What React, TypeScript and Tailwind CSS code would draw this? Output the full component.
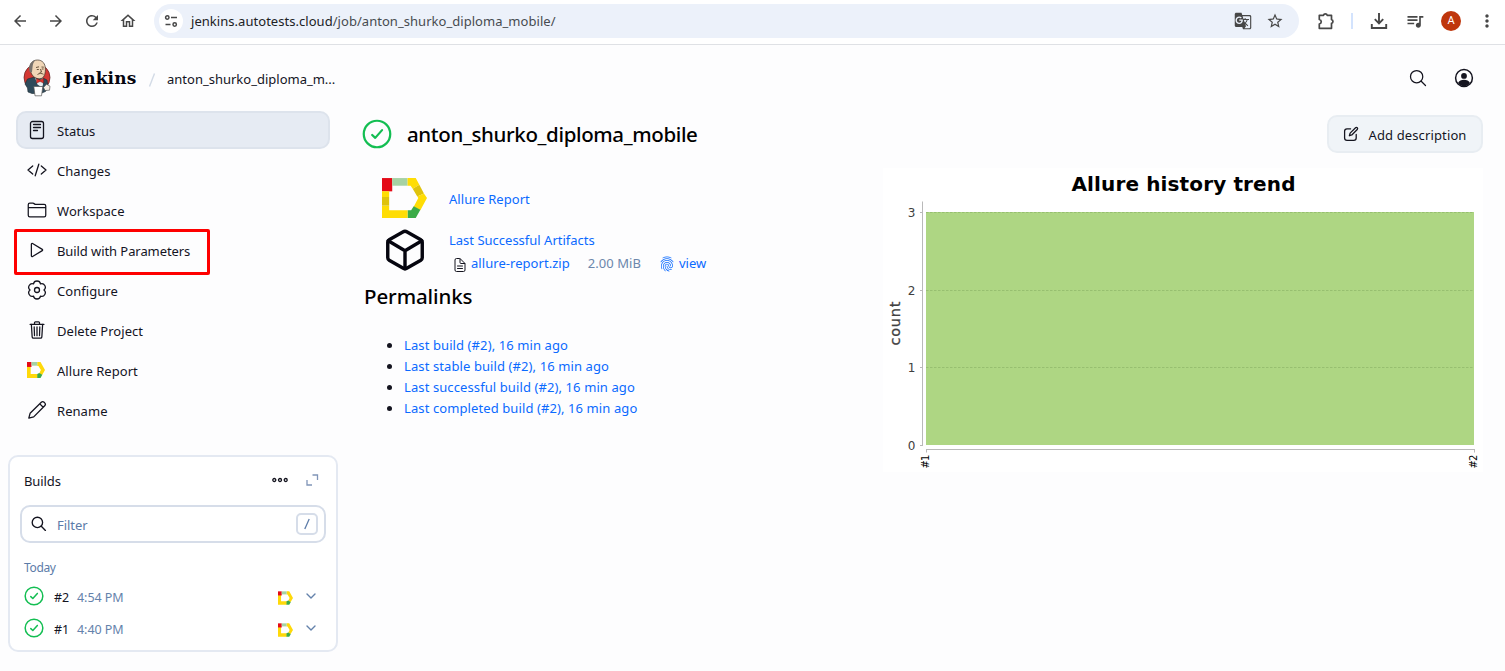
import React from "react";
import {
  IoCubeOutline,
  IoDocumentTextOutline,
  IoFingerPrintOutline,
  IoFolderOutline,
  IoPlayOutline,
  IoSearchOutline,
  IoTrashOutline,
} from "react-icons/io5";
import {
  MdArrowBack,
  MdArrowForward,
  MdGTranslate,
  MdMoreVert,
  MdOutlineHome,
  MdQueueMusic,
  MdRefresh,
  MdStarBorder,
} from "react-icons/md";

function AllureLogo({ className }: { className: string }) {
  return (
    <svg viewBox="0 0 44 39" className={className}>
      <path d="M0 0h10v13H0z" fill="#e40a17" />
      <path d="M10 0h15v7.500H10z" fill="#a6d2a4" />
      <path d="M25 0h8l3.500 6.500-6.500 4-2-3h-3z" fill="#ffdd05" />
      <path d="M36.500 6.500 41 15l-6.500 3-4.500-7.500z" fill="#dfc30d" />
      <path d="M41 15l3 4.500-6.500 12-6.500-3.500 4.500-8.500-1-1.500z" fill="#ffdd05" />
      <path d="M31 27.500l6.500 3.500-4.500 8h-8v-7.500h3.500z" fill="#3bab48" />
      <path d="M0 13h7v5.500H0zM0 27h7v4.500h18V39H0z" fill="#ffdd05" />
      <path d="M0 18.500h7V27H0z" fill="#dfc30d" />
    </svg>
  );
}

function AllureBadge({ className }: { className: string }) {
  return (
    <svg viewBox="0 0 44 39" className={className}>
      <path d="M0 8h9v21h17v10H0z" fill="#ffd90a" />
      <path d="M25 0h8l11 19.500-7 12-7-4 4-8-6-10h-3z" fill="#ffd90a" />
      <path d="M0 0h11v12H0z" fill="#e40a17" />
      <path d="M11 0h14v9H11z" fill="#a6d2a4" />
      <path d="M30 27l7.500 4-4.500 8h-8V29z" fill="#3bab48" />
    </svg>
  );
}

function SuccessIcon({ className }: { className: string }) {
  return (
    <svg viewBox="0 0 512 512" className={className} fill="none" stroke="#13be52" strokeLinecap="round" strokeLinejoin="round">
      <circle cx="256" cy="256" r="226" strokeWidth="38" />
      <path d="M342 190 226 322l-52-50" strokeWidth="38" />
    </svg>
  );
}

function Butler() {
  return (
    <svg viewBox="0 0 28 38" className="h-[38px] w-7 shrink-0">
      <ellipse cx="14" cy="18.500" rx="13" ry="13.300" fill="#d33833" stroke="#5b2020" strokeWidth=".7" />
      <path d="M5 33 4.500 29 2 25l2.500-5 5.500-1.500h9l5 2.500 1 7-2.500 4.500-5 2H9z" fill="#2f4a5a" stroke="#1d2b33" strokeWidth=".6" />
      <path d="M12 18.500l4 4 3.500-4 .5 8-2.500 1-3-2z" fill="#e9edf0" />
      <path d="M7.200 10.500C6.500 4.500 9.500 1 14.500 1s8 3.700 7.900 9.500c0 5-1.600 9.300-5.900 9.300-3.800 0-7.300-2.500-8.500-6.300z" fill="#f0d6b7" stroke="#3c3027" strokeWidth=".7" />
      <path d="M7 13.500C5 8 6.500 2.800 12.500 1c-2.500 2.500-2.800 5-3 7.500l-.5 4.500z" fill="#77716c" />
      <path d="M13 8.500l3-.7M18.500 8l2.300.2M13.800 10.500h2M18.800 10h1.800M17.500 10l1 3-1.800.5M14.500 15.500c1.800-1.500 4.500-1.200 6-.2" stroke="#59442f" strokeWidth=".9" fill="none" />
      <path d="M13.500 19.500l3.500 1.600 3.600-1.800v4.700l-3.600-1.500-3.500 1.700z" fill="#e0312b" stroke="#5b1616" strokeWidth=".4" />
      <path d="M10.800 27.500h9l-1.300 9.300h-6.500z" fill="#fff" stroke="#555" strokeWidth=".7" />
      <path d="M20.500 28.500l3-3.300 3.500 2-.5 4-4.500.3z" fill="#f4eee5" stroke="#444" strokeWidth=".6" />
    </svg>
  );
}

const ico = "h-5 w-5 shrink-0";

function Glyph({ d, className = ico, width = 1.3, children }: { d?: string; className?: string; width?: number; children?: React.ReactNode }) {
  return (
    <svg viewBox="0 0 20 20" className={className} fill="none" stroke="currentColor" strokeWidth={width} strokeLinecap="round" strokeLinejoin="round">
      {children}
      {d && <path d={d} />}
    </svg>
  );
}

const menu: { label: string; icon: React.ReactNode }[] = [
  {
    label: "Status",
    icon: (
      <Glyph d="M6.500 4.500h7M6.500 7.500h7M6.500 10.500h4">
        <rect x="3.500" y="1.500" width="13" height="17" rx="2" />
      </Glyph>
    ),
  },
  { label: "Changes", icon: <Glyph d="M5.700 6 1 10l4.700 4M11.800 4.200 8.200 15.800M14.300 6l4.700 4-4.700 4" /> },
  { label: "Workspace", icon: <IoFolderOutline className={ico} /> },
  { label: "Build with Parameters", icon: <IoPlayOutline className={ico} /> },
  {
    label: "Configure",
    icon: (
      <Glyph d="M17 10A3.550 3.550 0 0 0 13.500 3.940 3.550 3.550 0 0 0 6.500 3.940 3.550 3.550 0 0 0 3 10 3.550 3.550 0 0 0 6.500 16.060 3.550 3.550 0 0 0 13.500 16.060 3.550 3.550 0 0 0 17 10z">
        <circle cx="10" cy="10" r="2.500" />
      </Glyph>
    ),
  },
  { label: "Delete Project", icon: <IoTrashOutline className={ico} /> },
  { label: "Allure Report", icon: <AllureBadge className="mr-0.5 h-4 w-[18px] shrink-0" /> },
  { label: "Rename", icon: <Glyph d="M1.800 18.200l1.300-4.900L14.300 2.300c.8-.8 2-.8 2.800 0l.6.6c.8.8.8 2 0 2.800L6.700 16.900zM12.800 3.900l3.400 3.400" /> },
];

function BrowserBar() {
  return (
    <div className="flex h-[45px] items-start border-b border-[#dfe1e5] bg-white text-[#474747]">
      <div className="flex h-[42px] w-[154px] shrink-0 items-center gap-[18px] pl-[11px]">
        <MdArrowBack className="h-[18px] w-[18px]" />
        <MdArrowForward className="h-[18px] w-[18px]" />
        <MdRefresh className="h-[18px] w-[18px]" />
        <MdOutlineHome className="h-[18px] w-[18px]" />
      </div>
      <div className="mt-1 flex h-[34px] w-[1145px] shrink-0 items-center rounded-full bg-[#ecf1fa] pl-[5px] pr-[15px]">
        <div className="flex h-6 w-6 shrink-0 items-center justify-center rounded-full bg-white">
          <svg viewBox="0 0 14 14" className="h-[14px] w-[14px]" fill="none" stroke="#474747" strokeWidth="1.500">
            <circle cx="3.300" cy="3.500" r="1.700" />
            <path d="M7 3.500h6M1.500 10.500h5" />
            <circle cx="10.700" cy="10.500" r="1.700" />
          </svg>
        </div>
        <div className="ml-2 mt-[2px] grow text-[13px] tracking-[0.04px] text-[#202124]">
          jenkins.autotests.cloud<span className="text-[#474b50]">/job/anton_shurko_diploma_mobile/</span>
        </div>
        <MdGTranslate className="h-[18px] w-[18px]" />
        <MdStarBorder className="ml-[14px] h-[18px] w-[18px]" />
      </div>
      <div className="flex h-[42px] items-center">
        <Glyph
          className="ml-[17px] h-5 w-5"
          width={1.7}
          d="M3.300 4.300h4.200a1.900 1.900 0 0 1 3.700 0h4.300v4.300a1.900 1.900 0 0 1 0 3.700v5H3.300v-4.300c2.600-.7 2.600-3.900 0-4.500z"
        />
        <div className="ml-[15px] h-4 w-[2px] bg-[#d3e3fd]" />
        <svg viewBox="0 0 18 18" className="ml-[17px] h-[18px] w-[18px]" fill="none" stroke="#474747" strokeWidth="1.900">
          <path d="M9 1v10M4.800 7.200 9 11.400l4.200-4.200M1.800 12v4h14.400v-4" />
        </svg>
        <MdQueueMusic className="ml-[17px] h-5 w-5" />
        <div className="ml-4 flex h-5 w-5 items-center justify-center rounded-full bg-[#bf360c] font-[Roboto] text-[11px] text-white">A</div>
        <MdMoreVert className="ml-4 h-5 w-5" />
      </div>
    </div>
  );
}

function Header() {
  return (
    <header className="flex h-[66px] items-center pl-[23px] pr-[31px]">
      <Butler />
      <span className="ml-[13px] w-[74px] whitespace-nowrap font-['DejaVu_Serif'] text-[17px] font-bold leading-6 tracking-[0.15px] text-[#05050f]">Jenkins</span>
      <svg viewBox="0 0 8 16" className="ml-[10px] mt-1 h-4 w-2" stroke="#d3dbe6" strokeWidth="1.400">
        <path d="M6.500 1.500 1.500 14.500" />
      </svg>
      <span className="ml-[11px] mt-1 text-[13px]">anton_shurko_diploma_m...</span>
      <IoSearchOutline className="ml-auto h-5 w-5" />
      <svg viewBox="0 0 20 20" className="ml-[26px] h-5 w-5">
        <circle cx="10" cy="10" r="8.400" fill="none" stroke="currentColor" strokeWidth="1.500" />
        <circle cx="10" cy="7.900" r="2.900" fill="currentColor" />
        <path d="M4 15c1-2.500 3.500-3.200 6-3.200s5 .7 6 3.200c-1.500 2-3.500 3.200-6 3.200S5.500 17 4 15z" fill="currentColor" />
      </svg>
    </header>
  );
}

function Builds() {
  const rows = [
    ["#2", "4:54 PM"],
    ["#1", "4:40 PM"],
  ];
  return (
    <section className="ml-2 mt-[26px] h-[197px] w-[330px] rounded-[10px] border-2 border-[#e4e9f2] bg-white px-[10px] pt-[11px]">
      <div className="flex h-6 items-center pl-1">
        <span className="mt-[3px] text-[13px] tracking-[-0.1px]">Builds</span>
        <svg viewBox="0 0 18 6" className="ml-auto h-[6px] w-[18px]" fill="none" stroke="currentColor" strokeWidth="1.300">
          <circle cx="3.300" cy="3" r="1.500" />
          <circle cx="9" cy="3" r="1.500" />
          <circle cx="14.700" cy="3" r="1.500" />
        </svg>
        <svg viewBox="0 0 14 14" className="ml-4 mr-[7px] h-[14px] w-[14px]" fill="none" stroke="#8095b8" strokeWidth="1.300">
          <path d="M7.500 2h5v5M2 7v5h5" />
        </svg>
      </div>
      <div className="mt-[13px] flex h-[38px] w-[306px] items-center rounded-[10px] border-2 border-[#d6dde9] pl-[9px] pr-[6px]">
        <Glyph className="h-4 w-4" width={1.7} d="M13.200 13.200l4.800 4.800">
          <circle cx="8" cy="8" r="6.500" />
        </Glyph>
        <span className="ml-[10px] mt-[3px] grow text-[13px] tracking-[-0.05px] text-[#5b7ba8]">Filter</span>
        <span className="flex h-[22px] w-[22px] items-center justify-center rounded-[5px] border-2 border-[#d6dde9]">
          <svg viewBox="0 0 8 12" className="h-3 w-2" stroke="#5b7ba8" strokeWidth="1.300">
            <path d="M6.200 1 1.800 11" />
          </svg>
        </span>
      </div>
      <div className="mt-[16px] pl-1 text-[12px] leading-[17px] tracking-[-0.35px] text-[#5b7ba8]">Today</div>
      <div className="mt-[4px]">
        {rows.map(([n, t]) => (
          <div key={n} className="flex h-8 items-center pl-1 text-[12.500px]">
            <SuccessIcon className="h-5 w-5" />
            <span className="ml-[10px] mt-1 w-[23px]">{n}</span>
            <span className="mt-1 grow tracking-[-0.05px] text-[#6482ab]">{t}</span>
            <AllureBadge className="mt-[3px] h-[14px] w-[15px]" />
            <svg viewBox="0 0 12 8" className="ml-[12px] mr-[9px] h-2 w-3" fill="none" stroke="#6482ab" strokeWidth="1.400" strokeLinecap="round" strokeLinejoin="round">
              <path d="M2 2l4 4 4-4" />
            </svg>
          </div>
        ))}
      </div>
    </section>
  );
}

function Sidebar() {
  return (
    <aside className="w-[338px] shrink-0">
      <nav className="flex flex-col gap-[2px] pl-4">
        {menu.map(({ label, icon }) => (
          <div
            key={label}
            className={
              "relative flex h-[38px] w-[314px] items-center gap-[10px] rounded-[10px] border-2 pl-[9px] " +
              (label === "Status" ? "border-[#dde3ec] bg-[#e6ebf3]" : "border-transparent")
            }
          >
            {icon}
            <span className={"mt-1 text-[13px] " + (label === "Build with Parameters" ? "tracking-[-0.08px]" : "tracking-[0.05px]")}>{label}</span>
            {label === "Build with Parameters" && (
              <span className="absolute -left-1 -top-1 h-[46px] w-[196px] rounded-[2px] border-[3px] border-[#fe0000]" />
            )}
          </div>
        ))}
      </nav>
      <Builds />
    </aside>
  );
}

function TrendChart() {
  const ticks = [
    { n: "3", y: 212.5 },
    { n: "2", y: 290.5 },
    { n: "1", y: 367.5 },
    { n: "0", y: 445.5 },
  ];
  return (
    <svg viewBox="883 168 600 304" className="mt-[15px] h-[304px] w-[600px]" fontFamily="DejaVu Sans, sans-serif">
      <rect x="883" y="168" width="600" height="304" fill="#fff" />
      <text x="1071.500" y="191" fontSize="20" fontWeight="700" textLength="224" fill="#000">Allure history trend</text>
      <rect x="926" y="212" width="548" height="233" fill="#aed683" />
      <path d="M926 212.500H1474M926 290.500H1474M926 367.500H1474" stroke="#97bf70" strokeDasharray="2.500 1.500" />
      <path d="M922.500 201.500V445.500M926 449.500H1475M926.500 449.500v3M1474.500 449.500v3" stroke="#b9b9b9" fill="none" />
      {ticks.map(({ n, y }) => (
        <g key={n}>
          <path d={`M920 ${y}h3`} stroke="#b9b9b9" />
          <text x="915.500" y={y + 4} fontSize="12" textAnchor="end" fill="#404040">{n}</text>
        </g>
      ))}
      <text transform="translate(900 345.500) rotate(-90)" fontSize="14.500" textLength="44" fill="#404040" stroke="#404040" strokeWidth=".3">count</text>
      <text transform="translate(929 468.500) rotate(-90)" fontSize="10" textLength="14" fill="#000">#1</text>
      <text transform="translate(1477 468.500) rotate(-90)" fontSize="10" textLength="14" fill="#000">#2</text>
    </svg>
  );
}

const permalinks = [
  "Last build (#2), 16 min ago",
  "Last stable build (#2), 16 min ago",
  "Last successful build (#2), 16 min ago",
  "Last completed build (#2), 16 min ago",
];

function Main() {
  return (
    <main className="flex grow justify-between pl-[24px] pr-[22px]">
      <div>
        <div className="mt-2 flex h-[30px] items-center">
          <SuccessIcon className="h-[30px] w-[30px]" />
          <h1 className="-mt-px ml-[15px] whitespace-nowrap text-[20.500px] font-medium leading-7 tracking-[-0.37px] text-black">anton_shurko_diploma_mobile</h1>
        </div>
        <div className="mt-[29px] flex items-center pl-5">
          <AllureLogo className="h-10 w-[45px]" />
          <a className="ml-[22px] mt-1 text-[13px] tracking-[0.05px] text-[#0b6aff]">Allure Report</a>
        </div>
        <div className="mt-[10px] flex pl-[20px]">
          <IoCubeOutline className="-mt-px h-[46px] w-[46px] text-[#05050f] [&_*]:[stroke-width:38px]" />
          <div className="ml-[21px] text-[13px]">
            <div className="mt-[2px] leading-5 text-[#0b6aff]">Last Successful Artifacts</div>
            <div className="mt-[3px] flex h-5 items-center pl-[3px]">
              <IoDocumentTextOutline className="mt-[3px] h-4 w-4" />
              <span className="ml-[3px] mt-[2px] tracking-[0.05px] text-[#0b6aff]">allure-report.zip</span>
              <span className="ml-[18px] mt-[2px] tracking-[0.05px] text-[#6c87ac]">2.00 MiB</span>
              <IoFingerPrintOutline className="ml-[18px] mt-[2px] h-4 w-4 text-[#0b6aff]" />
              <span className="ml-[4px] mt-[2px] text-[#0b6aff]">view</span>
            </div>
          </div>
        </div>
        <h2 className="mt-[9px] pl-[2px] text-[20.500px] font-medium leading-7 tracking-[-0.1px] text-black">Permalinks</h2>
        <ul className="mt-[25px] pl-[42px] text-[13px] leading-[21px] tracking-[0.1px]">
          {permalinks.map((p) => (
            <li key={p} className="flex items-center">
              <span className="-ml-[17px] mr-[12px] h-[5px] w-[5px] rounded-full bg-[#14141f]" />
              <a className="text-[#0b6aff]">{p}</a>
            </li>
          ))}
        </ul>
      </div>
      <div className="flex flex-col items-end pt-1">
        <button className="flex h-[38px] w-[156px] items-center justify-center rounded-[10px] border-2 border-[#e8edf2] bg-[#f0f4f8] text-[13px]">
          <Glyph
            className="h-4 w-4"
            width={1.6}
            d="M9.500 3.500H5a3 3 0 0 0-3 3V15a3 3 0 0 0 3 3h8.500a3 3 0 0 0 3-3v-4.500M8 12.200l.9-3.300 6.800-6.700c.6-.6 1.500-.6 2.100 0s.6 1.500 0 2.100L11 11.200z"
          />
          <span className="ml-[9px] mt-[3px] whitespace-nowrap tracking-[0.13px]">Add description</span>
        </button>
        <TrendChart />
      </div>
    </main>
  );
}

export default function App() {
  return (
    <div className="h-[671px] w-[1505px] overflow-hidden bg-[#fdfdfe] font-['Noto_Sans',sans-serif] text-[#14141f]">
      <BrowserBar />
      <Header />
      <div className="flex">
        <Sidebar />
        <Main />
      </div>
    </div>
  );
}
